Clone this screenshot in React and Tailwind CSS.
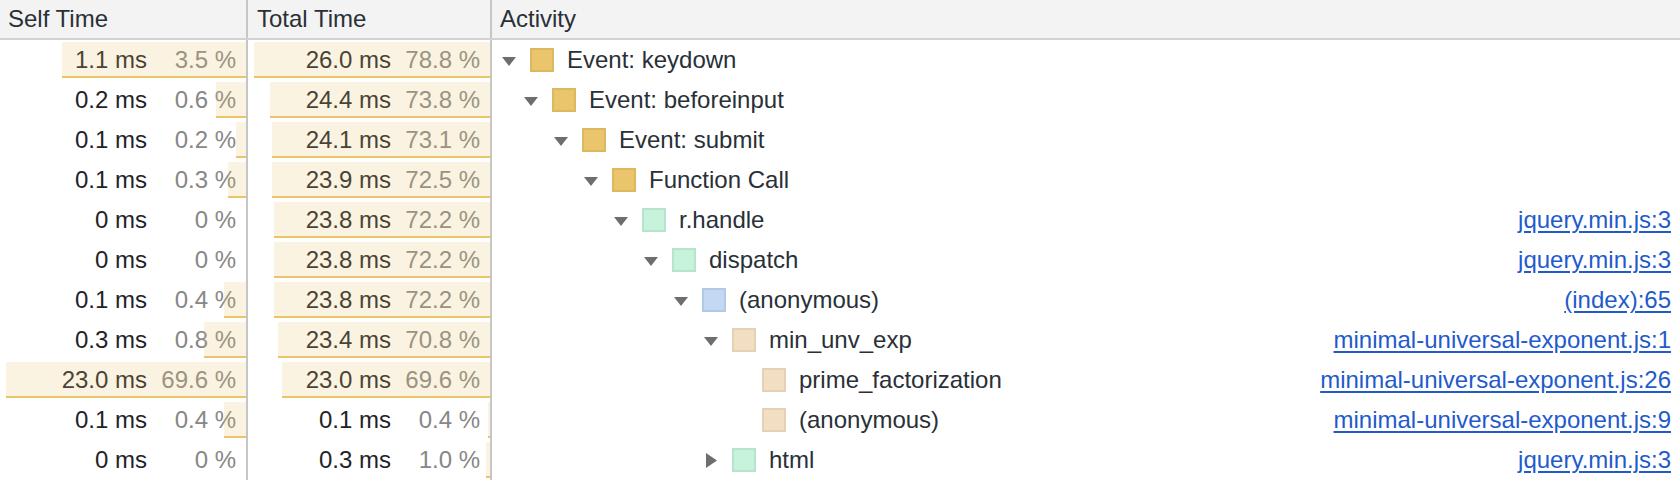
import React from "react";

const SWATCH = {
  yellow: "bg-[#eac56b] border-[#dcb860]",
  green: "bg-[#c7f3dd] border-[#b6e5cd]",
  blue: "bg-[#c4d8f4] border-[#b2c8e8]",
  tan: "bg-[#f1dec3] border-[#e5d1b5]",
};

const ROWS = [
  { self: ["1.1 ms", "3.5 %", 184], total: ["26.0 ms", "78.8 %", 236], level: 0, color: "yellow", name: "Event: keydown", toggle: "open" },
  { self: ["0.2 ms", "0.6 %", 30], total: ["24.4 ms", "73.8 %", 220], level: 1, color: "yellow", name: "Event: beforeinput", toggle: "open" },
  { self: ["0.1 ms", "0.2 %", 10], total: ["24.1 ms", "73.1 %", 218], level: 2, color: "yellow", name: "Event: submit", toggle: "open" },
  { self: ["0.1 ms", "0.3 %", 18], total: ["23.9 ms", "72.5 %", 218], level: 3, color: "yellow", name: "Function Call", toggle: "open" },
  { self: ["0 ms", "0 %", 0], total: ["23.8 ms", "72.2 %", 216], level: 4, color: "green", name: "r.handle", toggle: "open", link: "jquery.min.js:3" },
  { self: ["0 ms", "0 %", 0], total: ["23.8 ms", "72.2 %", 216], level: 5, color: "green", name: "dispatch", toggle: "open", link: "jquery.min.js:3" },
  { self: ["0.1 ms", "0.4 %", 22], total: ["23.8 ms", "72.2 %", 216], level: 6, color: "blue", name: "(anonymous)", toggle: "open", link: "(index):65" },
  { self: ["0.3 ms", "0.8 %", 42], total: ["23.4 ms", "70.8 %", 212], level: 7, color: "tan", name: "min_unv_exp", toggle: "open", link: "minimal-universal-exponent.js:1" },
  { self: ["23.0 ms", "69.6 %", 240], total: ["23.0 ms", "69.6 %", 208], level: 8, color: "tan", name: "prime_factorization", link: "minimal-universal-exponent.js:26" },
  { self: ["0.1 ms", "0.4 %", 22], total: ["0.1 ms", "0.4 %", 2], level: 8, color: "tan", name: "(anonymous)", link: "minimal-universal-exponent.js:9" },
  { self: ["0 ms", "0 %", 0], total: ["0.3 ms", "1.0 %", 4], level: 7, color: "green", name: "html", toggle: "closed", link: "jquery.min.js:3" },
];

// left padding of the row's toggle slot, first level sits closer than the rest
const indent = (level) => (level === 0 ? 10 : 32 + 30 * (level - 1));

const TimeCell = ({ cell, width }) => {
  const [ms, pct, bar] = cell;
  return (
    <div className={`relative h-full shrink-0 border-r-2 border-[#c6c6c6] ${width}`}>
      <div className="flex h-full items-center justify-end pr-[10px]">
        <span className="text-[#1f2329]">{ms}</span>
        <span className="w-[89px] text-right text-[#878787]">{pct}</span>
      </div>
      {bar > 0 && (
        <div
          className="absolute right-0 top-[2px] bottom-[2px] border-b-2 border-[#eac466] bg-[#e9c46a]/20"
          style={{ width: bar }}
        />
      )}
    </div>
  );
};

const Toggle = ({ state }) => (
  <div className="flex w-[14px] shrink-0 items-center">
    {state === "open" && (
      <svg width="14" height="9" viewBox="0 0 14 9" className="mt-[3px]">
        <polygon points="0,0 14,0 7,9" fill="#6e6e6e" />
      </svg>
    )}
    {state === "closed" && (
      <svg width="11" height="15" viewBox="0 0 11 15" className="ml-[2px]">
        <polygon points="0,0 11,7.5 0,15" fill="#6e6e6e" />
      </svg>
    )}
  </div>
);

export default function App() {
  return (
    <div className="h-[482px] w-[1680px] overflow-hidden bg-white text-[24px] font-['Liberation_Sans',Arial,sans-serif] text-[#2a3037]">
      <div className="flex h-[40px] border-b-2 border-[#d2d2d2] bg-[#f3f3f3]">
        <div className="flex w-[248px] shrink-0 items-center border-r-2 border-[#c6c6c6] pl-[8px]">Self Time</div>
        <div className="flex w-[244px] shrink-0 items-center border-r-2 border-[#c6c6c6] pl-[9px]">Total Time</div>
        <div className="flex flex-1 items-center pl-[8px]">Activity</div>
      </div>
      {ROWS.map((r, i) => (
        <div key={i} className="flex h-[40px]">
          <TimeCell cell={r.self} width="w-[248px]" />
          <TimeCell cell={r.total} width="w-[244px]" />
          <div className="flex min-w-0 flex-1 items-center pr-[9px]" style={{ paddingLeft: indent(r.level) }}>
            <Toggle state={r.toggle} />
            <div className={`ml-[14px] h-[24px] w-[24px] shrink-0 border-2 ${SWATCH[r.color]}`} />
            <span className="ml-[13px] whitespace-nowrap">{r.name}</span>
            {r.link && (
              <a className="ml-auto whitespace-nowrap text-[#1f5bcb] underline underline-offset-[3px]">{r.link}</a>
            )}
          </div>
        </div>
      ))}
    </div>
  );
}
